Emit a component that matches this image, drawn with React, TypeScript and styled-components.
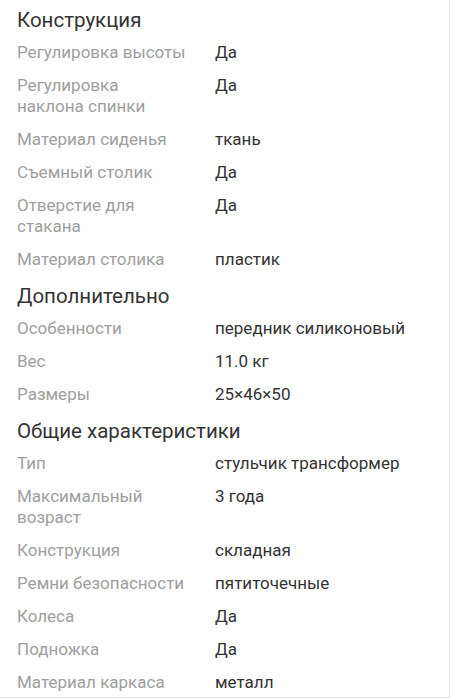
import React from "react";
import styled, { createGlobalStyle } from "styled-components";

const GlobalStyle = createGlobalStyle`
  html, body {
    margin: 0;
    padding: 0;
    background: #ffffff;
  }
  body {
    font-family: Roboto, "Noto Sans", "Liberation Sans", sans-serif;
  }
`;

interface Spec {
  label: string;
  value: string;
}

interface Group {
  title: string;
  specs: Spec[];
}

const GROUPS: Group[] = [
  {
    title: "Конструкция",
    specs: [
      { label: "Регулировка высоты", value: "Да" },
      { label: "Регулировка наклона спинки", value: "Да" },
      { label: "Материал сиденья", value: "ткань" },
      { label: "Съемный столик", value: "Да" },
      { label: "Отверстие для стакана", value: "Да" },
      { label: "Материал столика", value: "пластик" },
    ],
  },
  {
    title: "Дополнительно",
    specs: [
      { label: "Особенности", value: "передник силиконовый" },
      { label: "Вес", value: "11.0 кг" },
      { label: "Размеры", value: "25×46×50" },
    ],
  },
  {
    title: "Общие характеристики",
    specs: [
      { label: "Тип", value: "стульчик трансформер" },
      { label: "Максимальный возраст", value: "3 года" },
      { label: "Конструкция", value: "складная" },
      { label: "Ремни безопасности", value: "пятиточечные" },
      { label: "Колеса", value: "Да" },
      { label: "Подножка", value: "Да" },
      { label: "Материал каркаса", value: "металл" },
    ],
  },
];

const Page = styled.div`
  width: 450px;
  height: 698px;
  box-sizing: border-box;
  overflow: hidden;
  border-right: 1px solid #e6e6e6;
  border-bottom: 1px solid #e6e6e6;
  padding: 8px 0 0 17px;
`;

const Section = styled.section`
  & + & {
    margin-top: 8px;
  }
`;

const Title = styled.h2`
  margin: 0 0 4px;
  font-size: 20.5px;
  line-height: 24px;
  font-weight: 400;
  color: #333333;
`;

const Row = styled.div`
  display: grid;
  grid-template-columns: 170px 1fr;
  column-gap: 28px;
  padding: 6px 0;
  font-size: 17px;
  line-height: 21px;
`;

const Label = styled.span`
  color: #9e9e9e;
`;

const Value = styled.span`
  color: #333333;
`;

export default function App() {
  return (
    <>
      <GlobalStyle />
      <Page>
        {GROUPS.map((group) => (
          <Section key={group.title}>
            <Title>{group.title}</Title>
            {group.specs.map((spec) => (
              <Row key={spec.label}>
                <Label>{spec.label}</Label>
                <Value>{spec.value}</Value>
              </Row>
            ))}
          </Section>
        ))}
      </Page>
    </>
  );
}
